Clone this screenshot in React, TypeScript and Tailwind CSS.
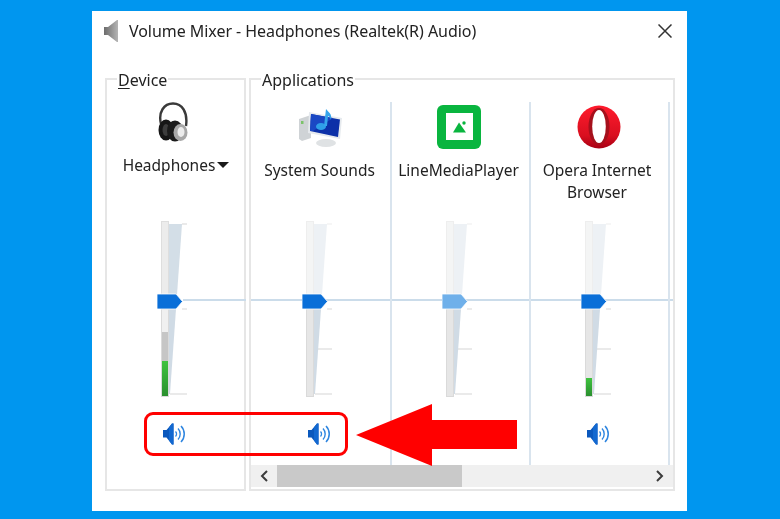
import type { ReactNode } from 'react'

// Volume mixer channel strip: slider drawing, mute button, label.
function Speaker() {
  return (
    <svg width="23" height="22" viewBox="0 0 23 22" fill="none">
      <path d="M0 7h3.5L9 .5h1.5v21H9l-5.5-7H0z" fill="#0a58bd" />
      <path d="M6 4.5 9 .5h1.5v21H9l-3-4z" fill="#1268d0" />
      <path d="M12.5 8.5a3.5 3.5 0 0 1 0 5" stroke="#2f86e0" strokeWidth="1.3" />
      <path d="M15 5.5a8 8 0 0 1 0 11" stroke="#2f86e0" strokeWidth="1.4" />
      <path d="M18 3a11.5 11.5 0 0 1 0 16" stroke="#2f86e0" strokeWidth="1.5" />
    </svg>
  )
}

function Slider({
  faded,
  disabled,
  gray,
  green,
  ticks,
}: {
  faded?: boolean
  disabled?: boolean
  gray?: number
  green?: number
  ticks: number[]
}) {
  return (
    <svg width="32" height="180" viewBox="0 0 32 180" className="relative">
      {/* wedge */}
      <polygon points="12,4 25,4 19,89 12,89" fill={faded ? '#edf1f5' : '#d3dee7'} />
      <polygon points="12,89 19,89 13,174 12,174" fill="#d0dbe5" />
      {/* track */}
      <rect x="4.5" y="1.5" width="7" height="175" fill={faded ? '#f4f5f5' : '#ececec'} stroke={faded ? '#eeeeee' : '#dedede'} />
      <rect x="4.5" y="89" width="7" height="87.5" fill={faded ? '#e6e6e6' : '#f0f0f0'} stroke="#dadada" />
      {gray && <rect x="5" y={gray} width="6" height={176 - gray} fill="#c6c6c6" />}
      {green && <rect x="5" y={green} width="6" height={176 - green} fill="url(#meter)" />}
      <defs>
        <linearGradient id="meter" x1="0" y1="0" x2="0" y2="1">
          <stop offset="0" stopColor="#3fc33f" />
          <stop offset="1" stopColor="#2a8f2f" />
        </linearGradient>
      </defs>
      {ticks.map((y) => (
        <line
          key={y}
          x1={y > 150 ? 13 : y > 120 ? 16 : 25}
          x2="30"
          y1={y}
          y2={y}
          stroke={y < 10 ? (faded ? '#f0f0f0' : '#dcdcdc') : '#dddddd'}
          strokeWidth="1.2"
        />
      ))}
      {/* thumb */}
      <polygon
        points="0,74 19,74 25.5,81.5 19,89 0,89"
        fill={disabled ? '#6fb0ea' : '#0a6fd8'}
        stroke="#ffffff"
        strokeWidth="0.8"
      />
    </svg>
  )
}

function Channel({
  icon,
  label,
  slider,
  border = true,
  width,
  labelClass,
  iconClass,
  sliderLeft,
  line,
}: {
  icon: ReactNode
  label: ReactNode
  slider: ReactNode
  border?: boolean
  width: string
  labelClass: string
  iconClass: string
  sliderLeft: string
  line: string
}) {
  return (
    <div className={`${width} ${border ? 'border-r-2 border-[#d9e4ee]' : ''} relative shrink-0 h-[363px] flex flex-col`}>
      <div className="h-[118px]">
        <div className={`${iconClass} flex justify-center`}>{icon}</div>
        <div className={`${labelClass} text-center text-[15.5px] leading-[22px]`}>{label}</div>
      </div>
      <div className={line} />
      <div className={`${sliderLeft} h-[180px]`}>{slider}</div>
      <div className={`${sliderLeft} mt-[23px]`}>
        <div className="ml-[6px]">
          <Speaker />
        </div>
      </div>
    </div>
  )
}

function Headphones() {
  return (
    <svg width="30" height="40" viewBox="0 0 30 40" fill="none">
      <path d="M3 22C0 10 6 1.5 15 1.5S30 10 28 24" stroke="#3a3a3a" strokeWidth="2.4" />
      <ellipse cx="8" cy="28" rx="7.5" ry="10.5" fill="#161616" />
      <ellipse cx="8" cy="28" rx="3.5" ry="6" fill="#3d3d3d" />
      <ellipse cx="17" cy="29" rx="8" ry="10.5" fill="#1b1b1b" />
      <ellipse cx="22.5" cy="30.5" rx="7" ry="8.5" fill="#a8a8a8" />
      <ellipse cx="23" cy="30" rx="3.5" ry="5" fill="#ececec" />
    </svg>
  )
}

function SystemSounds() {
  return (
    <svg width="44" height="40" viewBox="0 0 44 40">
      <polygon points="0,11 12,7 12,30 3,33 0,31" fill="#cfd3d6" />
      <rect x="2" y="13" width="2.5" height="3" fill="#7cc36a" />
      <ellipse cx="27" cy="35" rx="10" ry="4" fill="#dfe2e4" />
      <polygon points="10,4 43,10 41,31 9,25" fill="#e6eaee" />
      <polygon points="12,6 41,11.5 39,29 11,23" fill="#0c30a8" />
      <polygon points="12,6 34,10 14,23 11,23" fill="#1a48c4" />
      <ellipse cx="22" cy="18.5" rx="5" ry="3.6" fill="#2f9ee8" />
      <path d="M25 18 L27 1 C30 5 33 5 32 12 C31 9 30 8 29 8 L28 18z" fill="#35a4ec" />
    </svg>
  )
}

function LineIcon() {
  return (
    <svg width="44" height="44" viewBox="0 0 44 44">
      <rect width="44" height="44" rx="6" fill="#09b53f" />
      <rect x="9" y="8" width="27" height="27" fill="#fff" />
      <polygon points="16,27.5 29,27.5 22,17.5" fill="#09b53f" />
      <circle cx="27" cy="18" r="1.7" fill="#09b53f" />
    </svg>
  )
}

function OperaIcon() {
  return (
    <svg width="44" height="44" viewBox="0 0 44 44">
      <defs>
        <linearGradient id="opera" x1="0" y1="0" x2="0" y2="1">
          <stop offset="0" stopColor="#ff1b2d" />
          <stop offset="0.7" stopColor="#d90f1f" />
          <stop offset="1" stopColor="#a70014" />
        </linearGradient>
      </defs>
      <ellipse cx="22" cy="22" rx="21.5" ry="21.5" fill="url(#opera)" />
      <ellipse cx="22" cy="21.5" rx="10.5" ry="18.5" fill="#a5101c" />
      <ellipse cx="22" cy="21.5" rx="6.8" ry="16.5" fill="#ffffff" />
    </svg>
  )
}

export default function App() {
  const font = 'font-["Noto_Sans",sans-serif]'
  return (
    <div className={`${font} relative w-[780px] h-[519px] overflow-hidden bg-[#0096ef] pl-[92px] pt-[11px] text-[16px] text-[#222222]`}>
      <div className="w-[595px] h-[500px] bg-white blur-[0.3px]">
        {/* title bar */}
        <div className="h-[39px] flex items-center pl-[12px] pr-[15px]">
          <svg width="14" height="22" viewBox="0 0 14 22">
            <defs>
              <linearGradient id="spk" x1="0" y1="0" x2="1" y2="0">
                <stop offset="0" stopColor="#6c6c6c" />
                <stop offset="1" stopColor="#b5b5b5" />
              </linearGradient>
            </defs>
            <path d="M0 7h4l9-7h1v22h-1l-9-7H0z" fill="url(#spk)" />
          </svg>
          <span className="ml-[11px] tracking-[-0.05px]">Volume Mixer - Headphones (Realtek(R) Audio)</span>
          <svg width="14" height="14" viewBox="0 0 14 14" className="ml-auto" stroke="#333333" strokeWidth="1.5">
            <path d="M0.5 0.5l13 13M13.5 0.5l-13 13" />
          </svg>
        </div>
        {/* group boxes */}
        <div className="mt-[28px] ml-[13px] flex gap-[3px]">
          <div className="w-[141px] h-[413px] border-2 border-[#e6e6e6]">
            <div className="-mt-[11px] ml-[10px] w-fit bg-white px-[1px] leading-[22px] h-[22px] mb-[11px]">
              <span className="underline underline-offset-2">D</span>evice
            </div>
            <Channel
              width="w-full"
              border={false}
              iconClass="h-[52px] pr-[6px]"
              labelClass="pl-[1px] flex justify-center gap-[2px]"
              label={
                <>
                  <span>Headphones</span>
                  <svg width="12" height="6" viewBox="0 0 12 6" className="mt-[8px]">
                    <polygon points="0,0 12,0 6,6" fill="#1a1a1a" />
                  </svg>
                </>
              }
              icon={<Headphones />}
              line="absolute left-[76px] -right-[2px] top-[197px] h-[2px] bg-[#cbdcea]"
              sliderLeft="relative ml-[50px]"
              slider={<Slider gray={112} green={141} ticks={[4, 89, 174]} />}
            />
          </div>
          <div className="w-[426px] h-[413px] border-2 border-[#e6e6e6]">
            <div className="-mt-[11px] ml-[10px] w-fit bg-white px-[1px] leading-[22px] h-[22px] mb-[11px]">Applications</div>
            <div className="flex pl-[2px] overflow-hidden">
              <Channel
                width="w-[139px]"
                iconClass="pt-[6px] h-[57px] -ml-[2px]"
                labelClass="pr-[4px]"
                label="System Sounds"
                icon={<SystemSounds />}
                line="absolute -left-[4px] right-0 top-[197px] h-[2px] bg-[#cbdcea]"
                sliderLeft="relative ml-[49px]"
                slider={<Slider faded ticks={[4, 89, 129, 174]} />}
              />
              <Channel
                width="w-[139px]"
                iconClass="pt-[3px] h-[57px] pr-[4px]"
                labelClass="pr-[4px]"
                label="LineMediaPlayer"
                icon={<LineIcon />}
                line="absolute left-0 right-0 top-[197px] h-[2px] bg-[#cbdcea]"
                sliderLeft="relative ml-[50px]"
                slider={<Slider faded disabled ticks={[4, 89, 129, 174]} />}
              />
              <Channel
                width="w-[139px]"
                iconClass="pt-[3px] h-[57px] pr-[2px]"
                labelClass="pr-[5px]"
                label={
                  <>
                    Opera Internet
                    <br />
                    Browser
                  </>
                }
                icon={<OperaIcon />}
                line="absolute left-0 right-0 top-[197px] h-[2px] bg-[#cbdcea]"
                sliderLeft="relative ml-[50px]"
                slider={<Slider faded green={158} ticks={[4, 89, 129, 174]} />}
              />
              <div className="relative flex-1 h-[363px]">
                <div className="absolute left-0 right-0 top-[197px] h-[2px] bg-[#cbdcea]" />
              </div>
            </div>
            {/* scrollbar */}
            <div className="h-[22px] bg-[#f0f0f0] flex items-center">
              <div className="w-[26px] flex justify-center">
                <svg width="8" height="12" viewBox="0 0 8 12" fill="none" stroke="#3c3c3c" strokeWidth="2">
                  <path d="M7 1 2 6l5 5" />
                </svg>
              </div>
              <div className="w-[185px] h-full bg-[#c9c9c9]" />
              <div className="ml-auto w-[26px] flex justify-center">
                <svg width="8" height="12" viewBox="0 0 8 12" fill="none" stroke="#3c3c3c" strokeWidth="2">
                  <path d="M1 1l5 5-5 5" />
                </svg>
              </div>
            </div>
          </div>
        </div>
      </div>
      {/* annotation */}
      <div className="absolute left-[144px] top-[412px] w-[204px] h-[44px] rounded-[9px] border-[3px] border-[#ff0000]" />
      <svg width="164" height="64" viewBox="0 0 164 64" className="absolute left-[355px] top-[403px]">
        <polygon points="1,32 77,1 77,17 162,17 162,46 77,46 77,63" fill="#ff0000" />
      </svg>
    </div>
  )
}
